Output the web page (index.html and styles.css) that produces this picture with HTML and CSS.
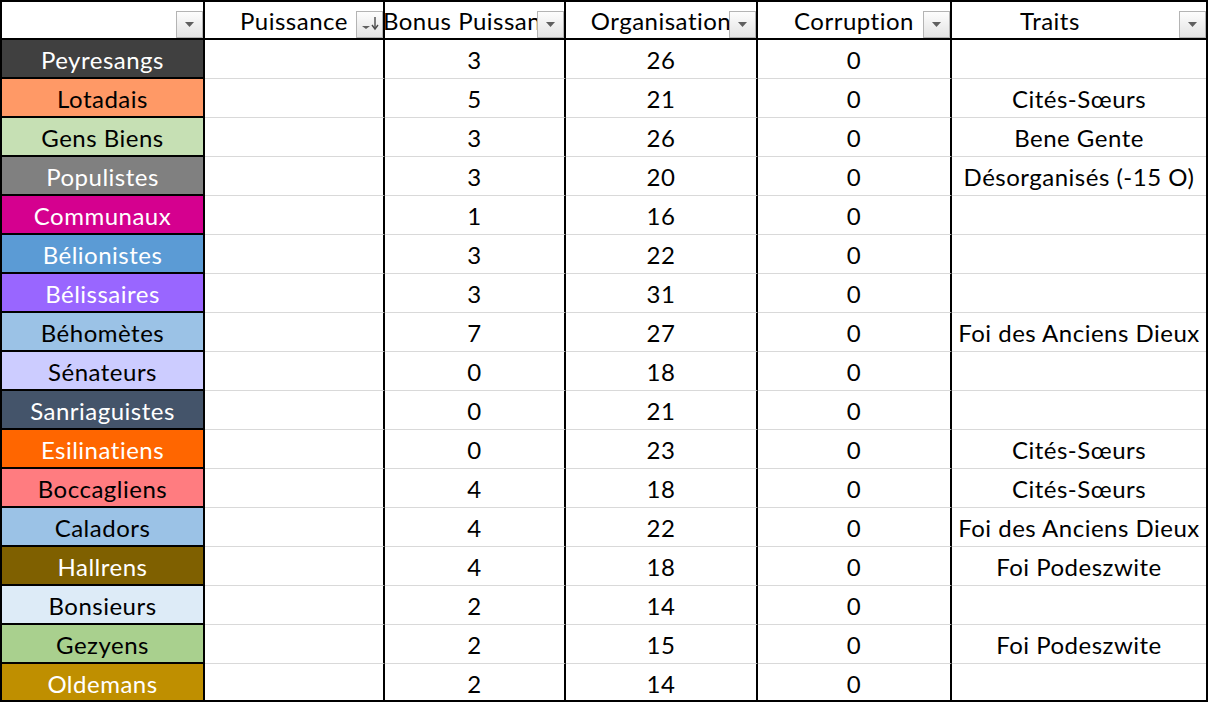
FILE: index.html
```html
<!DOCTYPE html>
<html lang="fr">
<head>
<meta charset="utf-8">
<title>Factions</title>
<link rel="stylesheet" href="styles.css">
</head>
<body>
<div class="sheet">
  <div class="row head">
    <div class="cell"><span class="fbtn"><svg width="9" height="5" viewBox="0 0 9 5"><path d="M0 0H9L4.5 5Z" fill="#5f5f5f"/></svg></span></div>
    <div class="cell"><span class="htext">Puissance</span><span class="fbtn sort"><svg width="20" height="18" viewBox="0 0 20 18"><path d="M2 12H10L6 15Z" fill="#5f5f5f"/><path d="M15 3V14" stroke="#4a4a4a" stroke-width="1.4"/><path d="M12 11L15 15L18 11" fill="none" stroke="#4a4a4a" stroke-width="1.4"/></svg></span></div>
    <div class="cell"><span class="htext">Bonus Puissance</span><span class="fbtn"><svg width="9" height="5" viewBox="0 0 9 5"><path d="M0 0H9L4.5 5Z" fill="#5f5f5f"/></svg></span></div>
    <div class="cell"><span class="htext">Organisation</span><span class="fbtn"><svg width="9" height="5" viewBox="0 0 9 5"><path d="M0 0H9L4.5 5Z" fill="#5f5f5f"/></svg></span></div>
    <div class="cell"><span class="htext">Corruption</span><span class="fbtn"><svg width="9" height="5" viewBox="0 0 9 5"><path d="M0 0H9L4.5 5Z" fill="#5f5f5f"/></svg></span></div>
    <div class="cell traits"><span class="htext">Traits</span><span class="fbtn"><svg width="9" height="5" viewBox="0 0 9 5"><path d="M0 0H9L4.5 5Z" fill="#5f5f5f"/></svg></span></div>
  </div>

  <div class="row"><div class="cell name c-peyresangs light">Peyresangs</div><div class="cell"></div><div class="cell">3</div><div class="cell">26</div><div class="cell">0</div><div class="cell"></div></div>
  <div class="row"><div class="cell name c-lotadais">Lotadais</div><div class="cell"></div><div class="cell">5</div><div class="cell">21</div><div class="cell">0</div><div class="cell">Cités-Sœurs</div></div>
  <div class="row"><div class="cell name c-gensbiens">Gens Biens</div><div class="cell"></div><div class="cell">3</div><div class="cell">26</div><div class="cell">0</div><div class="cell">Bene Gente</div></div>
  <div class="row"><div class="cell name c-populistes light">Populistes</div><div class="cell"></div><div class="cell">3</div><div class="cell">20</div><div class="cell">0</div><div class="cell">Désorganisés (-15 O)</div></div>
  <div class="row"><div class="cell name c-communaux light">Communaux</div><div class="cell"></div><div class="cell">1</div><div class="cell">16</div><div class="cell">0</div><div class="cell"></div></div>
  <div class="row"><div class="cell name c-belionistes light">Bélionistes</div><div class="cell"></div><div class="cell">3</div><div class="cell">22</div><div class="cell">0</div><div class="cell"></div></div>
  <div class="row"><div class="cell name c-belissaires light">Bélissaires</div><div class="cell"></div><div class="cell">3</div><div class="cell">31</div><div class="cell">0</div><div class="cell"></div></div>
  <div class="row"><div class="cell name c-behometes">Béhomètes</div><div class="cell"></div><div class="cell">7</div><div class="cell">27</div><div class="cell">0</div><div class="cell">Foi des Anciens Dieux</div></div>
  <div class="row"><div class="cell name c-senateurs">Sénateurs</div><div class="cell"></div><div class="cell">0</div><div class="cell">18</div><div class="cell">0</div><div class="cell"></div></div>
  <div class="row"><div class="cell name c-sanriaguistes light">Sanriaguistes</div><div class="cell"></div><div class="cell">0</div><div class="cell">21</div><div class="cell">0</div><div class="cell"></div></div>
  <div class="row"><div class="cell name c-esilinatiens light">Esilinatiens</div><div class="cell"></div><div class="cell">0</div><div class="cell">23</div><div class="cell">0</div><div class="cell">Cités-Sœurs</div></div>
  <div class="row"><div class="cell name c-boccagliens">Boccagliens</div><div class="cell"></div><div class="cell">4</div><div class="cell">18</div><div class="cell">0</div><div class="cell">Cités-Sœurs</div></div>
  <div class="row"><div class="cell name c-caladors">Caladors</div><div class="cell"></div><div class="cell">4</div><div class="cell">22</div><div class="cell">0</div><div class="cell">Foi des Anciens Dieux</div></div>
  <div class="row"><div class="cell name c-hallrens light">Hallrens</div><div class="cell"></div><div class="cell">4</div><div class="cell">18</div><div class="cell">0</div><div class="cell">Foi Podeszwite</div></div>
  <div class="row"><div class="cell name c-bonsieurs">Bonsieurs</div><div class="cell"></div><div class="cell">2</div><div class="cell">14</div><div class="cell">0</div><div class="cell"></div></div>
  <div class="row"><div class="cell name c-gezyens">Gezyens</div><div class="cell"></div><div class="cell">2</div><div class="cell">15</div><div class="cell">0</div><div class="cell">Foi Podeszwite</div></div>
  <div class="row last"><div class="cell name c-oldemans light">Oldemans</div><div class="cell"></div><div class="cell">2</div><div class="cell">14</div><div class="cell">0</div><div class="cell"></div></div>
</div>
</body>
</html>
```

FILE: styles.css
```css
* { box-sizing: border-box; }
html, body { margin: 0; padding: 0; background: #ffffff; }
body {
  font-family: "Lato", "Open Sans", sans-serif;
  font-size: 24px;
  letter-spacing: 0.5px;
  color: #000000;
  overflow: hidden;
}
.sheet {
  width: 1208px;
  border: 2px solid #000000;
}
.row {
  display: grid;
  grid-template-columns: 203px 180px 181px 192px 194px 254px;
  height: 39px;
}
.row.head { height: 38px; }
.row.last { height: 36px; }
.cell {
  display: flex;
  align-items: center;
  justify-content: center;
  white-space: nowrap;
  overflow: hidden;
  border-right: 2px solid #000000;
  border-bottom: 1px solid #d9d9d9;
  padding-top: 1px;
  position: relative;
}
.cell:last-child { border-right: none; }
.row.last .cell { border-bottom: none; padding-top: 3px; }
.head .cell {
  border-bottom: 2px solid #000000;
  padding-top: 0;
}
.htext { display: block; flex: none; }
.head .traits { padding-right: 58px; }
.cell.name { border-bottom: 2px solid #000000; }
.row.last .cell.name { border-bottom: none; }
.light { color: #ffffff; }

.fbtn {
  position: absolute;
  right: 0;
  bottom: 0;
  width: 27px;
  height: 27px;
  border: 1px solid #b4b4b4;
  background: linear-gradient(#fdfdfd, #e3e3e3);
  display: flex;
  align-items: center;
  justify-content: center;
}
.fbtn.sort { justify-content: flex-start; padding-left: 3px; align-items: flex-start; padding-top: 2px; }

.c-peyresangs { background: #404040; }
.c-lotadais { background: #ff9966; }
.c-gensbiens { background: #c6e0b4; }
.c-populistes { background: #808080; }
.c-communaux { background: #d5008f; }
.c-belionistes { background: #5b9bd5; }
.c-belissaires { background: #9966ff; }
.c-behometes { background: #9bc2e6; }
.c-senateurs { background: #ccccff; }
.c-sanriaguistes { background: #44546a; }
.c-esilinatiens { background: #ff6600; }
.c-boccagliens { background: #ff7c80; }
.c-caladors { background: #9bc2e6; }
.c-hallrens { background: #7f6000; }
.c-bonsieurs { background: #ddebf7; }
.c-gezyens { background: #a9d08e; }
.c-oldemans { background: #bf8f00; }
```
